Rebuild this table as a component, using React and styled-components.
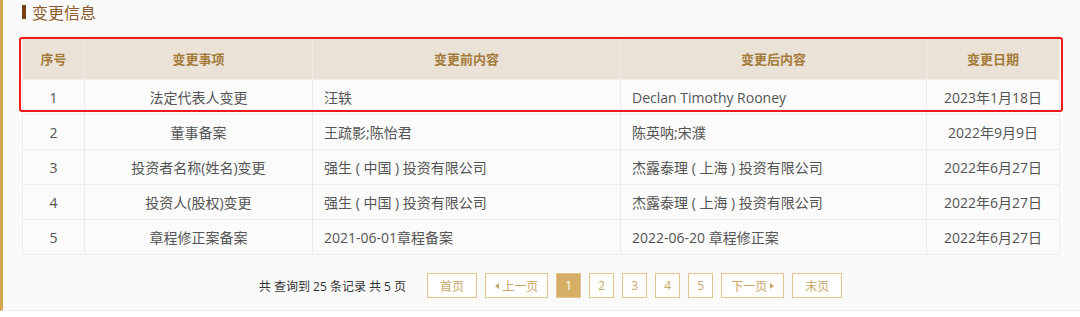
import React from "react"
import styled, { createGlobalStyle } from "styled-components"

const GlobalStyle = createGlobalStyle`
  body {
    margin: 0;
    background: #fff;
    font-family: "Open Sans", "Noto Sans CJK SC", sans-serif;
  }
`

const Panel = styled.div`
  height: 311px;
  box-sizing: border-box;
  background: #fafafa;
  border-left: 3px solid #d4a64d;
  border-bottom: 1px solid #ececec;
  padding: 0 21px 0 19px;
`

const Title = styled.div`
  height: 24px;
  display: flex;
  align-items: center;
  font-size: 16px;
  color: #8c5a2c;
  font-family: "Noto Sans CJK SC", sans-serif;

  &::before {
    content: "";
    width: 4px;
    height: 14px;
    background: #7a3f0c;
    margin-right: 6px;
  }
`

const TableWrap = styled.div`
  position: relative;
  margin-top: 12px;
`

const Table = styled.table`
  width: 1037px;
  border-collapse: collapse;
  table-layout: fixed;
  font-size: 14px;
  color: #555;
`

const HeadRow = styled.tr`
  height: 43px;
`

const Row = styled.tr`
  height: 35px;
`

const Th = styled.th`
  padding: 0;
  background: #eae2d6;
  color: #a47b3b;
  font-size: 13px;
  font-weight: bold;
  border: 1px solid #f1ece5;
  text-align: center;
`

const Td = styled.td`
  padding: 0 ${p => (p.left ? "11px" : "0")};
  background: #fbfbfb;
  border: 1px solid #ececec;
  text-align: ${p => (p.left ? "left" : "center")};
  white-space: nowrap;
`

// red annotation box drawn over the first row
const Highlight = styled.div`
  position: absolute;
  left: -3px;
  top: 1px;
  width: 1044px;
  height: 75px;
  box-sizing: border-box;
  border: 2.5px solid #f01a1a;
  border-radius: 3px;
  pointer-events: none;
`

const Pager = styled.div`
  display: flex;
  align-items: center;
  justify-content: center;
  gap: 8px;
  margin-top: 18px;
  padding-left: 20px;
  font-size: 12px;
`

const Info = styled.span`
  color: #333;
  margin-right: 13px;
`

const PageBtn = styled.span`
  height: 25px;
  min-width: 25px;
  box-sizing: border-box;
  display: inline-flex;
  align-items: center;
  justify-content: center;
  gap: 3px;
  padding: 0 ${p => (p.wide ? "12px" : p.arrow ? "9px" : "0")};
  border: 1px solid #e2c58c;
  background: ${p => (p.active ? "#d4ae64" : "#fff")};
  color: ${p => (p.active ? "#fff" : "#c9a565")};
`

const Arrow = styled.i`
  width: 0;
  height: 0;
  border-top: 3px solid transparent;
  border-bottom: 3px solid transparent;
  ${p =>
    p.dir === "left"
      ? "border-right: 4px solid #c9a565;"
      : "border-left: 4px solid #c9a565;"}
`

const columns = ["序号", "变更事项", "变更前内容", "变更后内容", "变更日期"]
const widths = [62, 228, 308, 306, 133]

const rows = [
  ["1", "法定代表人变更", "汪轶", "Declan Timothy Rooney", "2023年1月18日"],
  ["2", "董事备案", "王疏影;陈怡君", "陈英呐;宋濮", "2022年9月9日"],
  ["3", "投资者名称(姓名)变更", "强生 ( 中国 ) 投资有限公司", "杰露泰理 ( 上海 ) 投资有限公司", "2022年6月27日"],
  ["4", "投资人(股权)变更", "强生 ( 中国 ) 投资有限公司", "杰露泰理 ( 上海 ) 投资有限公司", "2022年6月27日"],
  ["5", "章程修正案备案", "2021-06-01章程备案", "2022-06-20 章程修正案", "2022年6月27日"],
]

export default function App() {
  return (
    <>
      <GlobalStyle />
      <Panel>
        <Title>变更信息</Title>
        <TableWrap>
          <Table>
            <colgroup>
              {widths.map((w, i) => (
                <col key={i} style={{ width: w }} />
              ))}
            </colgroup>
            <thead>
              <HeadRow>
                {columns.map(c => (
                  <Th key={c}>{c}</Th>
                ))}
              </HeadRow>
            </thead>
            <tbody>
              {rows.map(r => (
                <Row key={r[0]}>
                  <Td>{r[0]}</Td>
                  <Td>{r[1]}</Td>
                  <Td left>{r[2]}</Td>
                  <Td left>{r[3]}</Td>
                  <Td>{r[4]}</Td>
                </Row>
              ))}
            </tbody>
          </Table>
          <Highlight />
        </TableWrap>
        <Pager>
          <Info>共 查询到 25 条记录 共 5 页</Info>
          <PageBtn wide>首页</PageBtn>
          <PageBtn arrow>
            <Arrow dir="left" />上一页
          </PageBtn>
          <PageBtn active>1</PageBtn>
          <PageBtn>2</PageBtn>
          <PageBtn>3</PageBtn>
          <PageBtn>4</PageBtn>
          <PageBtn>5</PageBtn>
          <PageBtn arrow>
            下一页<Arrow dir="right" />
          </PageBtn>
          <PageBtn wide>末页</PageBtn>
        </Pager>
      </Panel>
    </>
  )
}
